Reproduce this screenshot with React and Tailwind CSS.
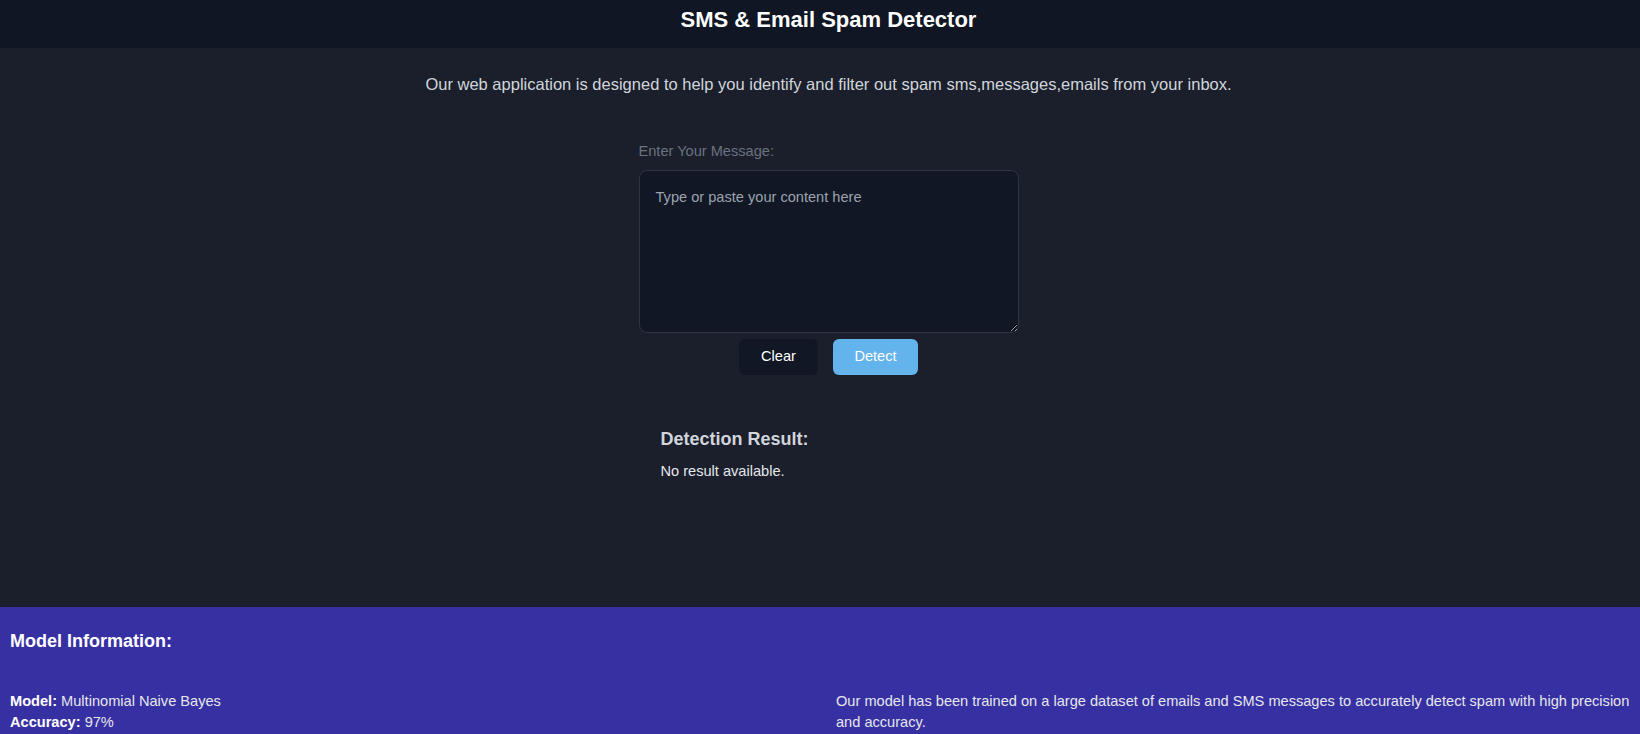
import React, { useState } from 'react';

export default function App() {
  const [message, setMessage] = useState('');
  const [result, setResult] = useState(null);

  return (
    <div className="min-h-screen bg-[#1a1f2b] text-white" style={{ fontFamily: '"Liberation Sans", Arial, sans-serif' }}>
      {/* Header */}
      <header className="h-12 bg-[#101623] pl-[17px] pt-[5px] text-center">
        <h1 className="text-[22px] leading-[30px] font-bold text-white">SMS &amp; Email Spam Detector</h1>
      </header>

      {/* Intro */}
      <p className="mt-6 pl-[17px] text-center text-[16.5px] leading-6 text-[#d1d5db]">
        Our web application is designed to help you identify and filter out spam sms,messages,emails from your inbox.
      </p>

      {/* Form */}
      <div className="mt-[45px] pl-[17px] flex flex-col items-center">
        <div className="w-[380px]">
          <label className="block text-[14.6px] leading-5 text-[#6b7280] mb-[9px]">Enter Your Message:</label>
          <textarea
            value={message}
            onChange={(e) => setMessage(e.target.value)}
            placeholder="Type or paste your content here"
            className="block w-full h-[163px] rounded-lg border border-[#2d3442] bg-[#111724] px-4 py-4 text-[14.6px] leading-5 text-white placeholder:text-[#9ca3af] outline-none"
          />
        </div>
        <div className="mt-1.5 flex gap-[15px]">
          <button onClick={() => { setMessage(''); setResult(null); }} className="w-[79px] h-9 rounded-md bg-[#111724] text-[14.6px] text-white">
            Clear
          </button>
          <button onClick={() => setResult(message ? 'Not Spam' : null)} className="w-[85px] h-9 rounded-md bg-[#63b3ed] text-[14.6px] text-white">
            Detect
          </button>
        </div>

        {/* Result */}
        <div className="w-[380px] px-[22px] mt-[50px]">
          <h2 className="text-lg leading-7 font-bold text-[#d1d5db]">Detection Result:</h2>
          <p className="mt-2 text-[14.6px] leading-5 text-[#e5e7eb]">{result || 'No result available.'}</p>
        </div>
      </div>

      {/* Model info */}
      <footer className="mt-[126px] bg-[#3730a3] px-2.5 pt-5 pb-6">
        <h3 className="text-lg leading-7 font-bold text-white">Model Information:</h3>
        <div className="mt-9 grid grid-cols-2 gap-8 text-[14.6px] leading-[21px] text-[#e5e7eb]">
          <div>
            <p><span className="font-bold text-white">Model:</span> Multinomial Naive Bayes</p>
            <p><span className="font-bold text-white">Accuracy:</span> 97%</p>
          </div>
          <p>
            Our model has been trained on a large dataset of emails and SMS messages to accurately detect spam with high precision and accuracy.
          </p>
        </div>
      </footer>
    </div>
  );
}
